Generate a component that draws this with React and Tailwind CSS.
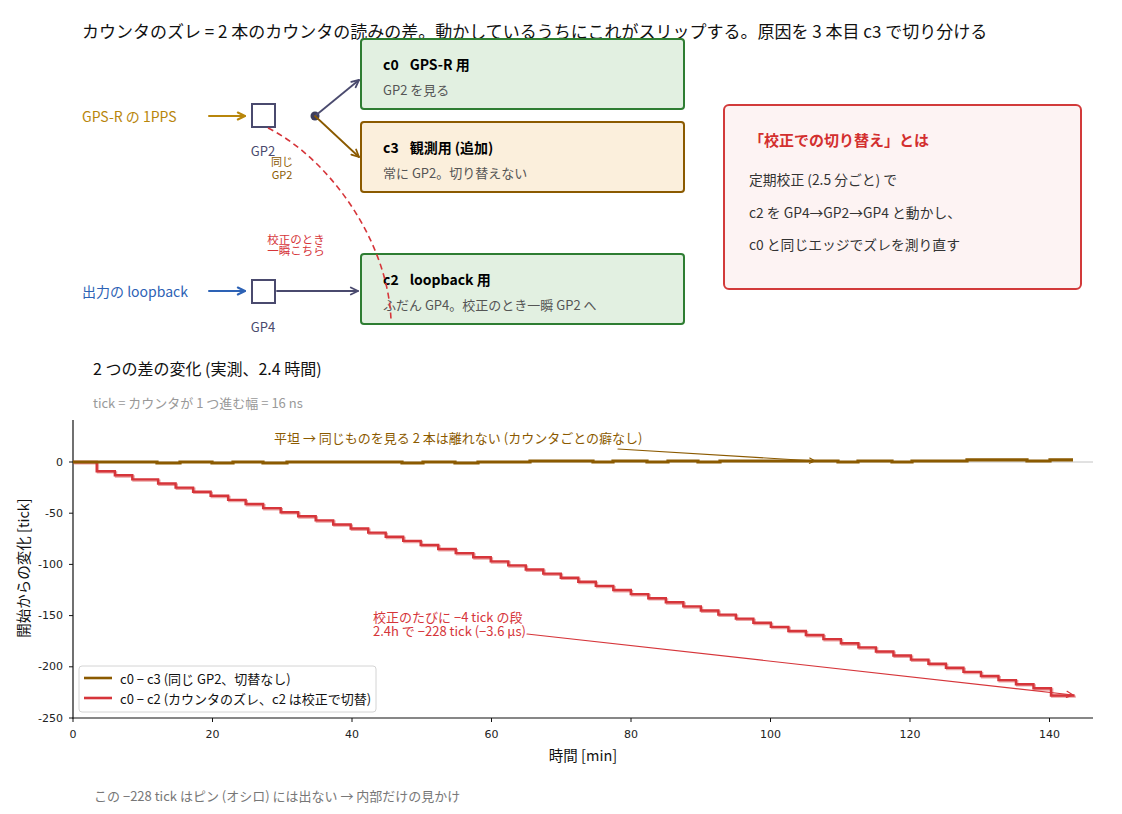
import React from "react";

const SLATE = "#4a4a6e";
const BROWN = "#8b5a00";
const GOLD = "#b8860b";
const BLUE = "#2d62b5";
const RED = "#d6353a";

// 矢印（matplotlib の "->" 風の開いた矢じり）
const Arrow = ({ x1, y1, x2, y2, color, w = 1.6, len = 8 }) => {
  const a = Math.atan2(y2 - y1, x2 - x1);
  const s = 0.45;
  const p1 = `${x2 - len * Math.cos(a - s)},${y2 - len * Math.sin(a - s)}`;
  const p2 = `${x2 - len * Math.cos(a + s)},${y2 - len * Math.sin(a + s)}`;
  return (
    <g stroke={color} strokeWidth={w} fill="none" strokeLinecap="round">
      <line x1={x1} y1={y1} x2={x2} y2={y2} />
      <polyline points={`${p1} ${x2},${y2} ${p2}`} strokeLinejoin="round" />
    </g>
  );
};

// チャート座標
const X = (m) => 73 + m * 6.975;
const Y = (v) => 462 - v * 1.024;

const stepPath = (segs, endX) => {
  let d = `M${segs[0][0]},${Y(segs[0][1])}`;
  for (let i = 1; i < segs.length; i++) {
    d += ` H${segs[i][0]} V${Y(segs[i][1])}`;
  }
  return d + ` H${endX}`;
};

// c0 - c3 : ほぼ 0 のまま（±1〜2 tick）
const brownSegs = [
  [73, 0], [157, -1], [180, 0], [212, -1], [233, 0], [263, -1], [287, 0],
  [402, -1], [423, 0], [455, -1], [478, 0], [530, 1], [593, 0], [613, 1],
  [647, 0], [668, 1], [698, 0], [720, 1], [838, 0], [858, 1], [892, 0],
  [912, 1], [967, 2], [1027, 1], [1050, 2],
];

// c0 - c2 : 校正ごとに -4 tick の段
const redSegs = (() => {
  const times = [3.4, 6.0, 8.5];
  for (let k = 0; k < 52; k++) times.push(12.2 + k * 2.51);
  const segs = [[X(0), 0]];
  times.forEach((t, i) => {
    const v = i === times.length - 1 ? -228 : -9 - 4 * i;
    segs.push([X(t), v]);
  });
  return segs;
})();

const yTicks = [0, -50, -100, -150, -200, -250];
const xTicks = [0, 20, 40, 60, 80, 100, 120, 140];

const Chart = () => (
  <div className="relative h-[360px]">
    <svg
      width="1122"
      height="360"
      viewBox="0 412 1122 360"
      className="block"
      fontFamily="'Noto Sans CJK JP', sans-serif"
    >
      {/* y = 0 の基準線 */}
      <line x1="73" y1="462" x2="1093" y2="462" stroke="#c4c4c4" strokeWidth="1" />

      {/* spines */}
      <line x1="73" y1="420" x2="73" y2="718.5" stroke="#111" strokeWidth="1.2" />
      <line x1="72.5" y1="718" x2="1093" y2="718" stroke="#111" strokeWidth="1.2" />

      {yTicks.map((v) => (
        <g key={v}>
          <line x1="69" y1={Y(v)} x2="73" y2={Y(v)} stroke="#111" strokeWidth="1" />
          <text
            x="63"
            y={Y(v)}
            textAnchor="end"
            dominantBaseline="central"
            fontSize="11"
            fontFamily="'DejaVu Sans', sans-serif"
            fill="#222"
          >
            {v}
          </text>
        </g>
      ))}
      {xTicks.map((m) => (
        <g key={m}>
          <line x1={X(m)} y1="718" x2={X(m)} y2="722" stroke="#111" strokeWidth="1" />
          <text
            x={X(m)}
            y="734"
            textAnchor="middle"
            dominantBaseline="central"
            fontSize="11"
            fontFamily="'DejaVu Sans', sans-serif"
            fill="#222"
          >
            {m}
          </text>
        </g>
      ))}

      <text x="583" y="754" textAnchor="middle" dominantBaseline="central" fontSize="14.5" fill="#111">
        時間 [min]
      </text>
      <text
        x="22"
        y="568"
        textAnchor="middle"
        dominantBaseline="central"
        fontSize="14.5"
        fill="#111"
        transform="rotate(-90 22 568)"
      >
        開始からの変化 [tick]
      </text>

      {/* データ */}
      <path
        d={stepPath(redSegs, X(143.6))}
        fill="none"
        stroke="#eba3a3"
        strokeWidth="2.4"
        transform="translate(1.2 1.2)"
      />
      <path d={stepPath(redSegs, X(143.6))} fill="none" stroke={RED} strokeWidth="2.4" />
      <path d={stepPath(brownSegs, 1073)} fill="none" stroke={BROWN} strokeWidth="3.2" />

      {/* 注記 */}
      <text x="274" y="437" dominantBaseline="central" fontSize="13" fill={BROWN}>
        平坦 → 同じものを見る 2 本は離れない (カウンタごとの癖なし)
      </text>
      <Arrow x1={618} y1={449} x2={815} y2={461} color={BROWN} w={1.2} len={6} />
      <Arrow x1={527} y1={634} x2={1073} y2={695} color={RED} w={1.2} len={7} />

      {/* 凡例 */}
      <rect x="79" y="666" width="297" height="46" rx="3" fill="#fff" fillOpacity="0.85" stroke="#d4d4d4" />
      <line x1="84" y1="678" x2="112" y2="678" stroke={BROWN} strokeWidth="2.6" />
      <text x="120" y="678" dominantBaseline="central" fontSize="13" fill="#111">
        c0 − c3 (同じ GP2、切替なし)
      </text>
      <line x1="84" y1="698" x2="112" y2="698" stroke={RED} strokeWidth="2.6" />
      <text x="120" y="698" dominantBaseline="central" fontSize="13" fill="#111">
        c0 − c2 (カウンタのズレ、c2 は校正で切替)
      </text>
    </svg>
    <p className="absolute left-[373px] top-[198px] text-[13px] leading-[14px] text-[#d6353a] whitespace-nowrap">
      校正のたびに −4 tick の段
      <br />
      2.4h で −228 tick (−3.6 µs)
    </p>
  </div>
);

const CounterBox = ({ top, id, title, sub, tone }) => (
  <div
    className={`absolute left-[360px] w-[325px] h-[72px] rounded-[4px] border-2 pl-[21px] pt-[14px] ${
      tone === "green" ? "bg-[#e2f0e1] border-[#2e7d32]" : "bg-[#fbefdc] border-[#8b5a00]"
    }`}
    style={{ top }}
  >
    <p className="flex gap-[11px] text-[14px] leading-[20px] font-bold text-black">
      <span>{id}</span>
      <span>{title}</span>
    </p>
    <p className="mt-[7px] text-[13px] leading-[18px] text-[#555]">{sub}</p>
  </div>
);

const Diagram = () => (
  <div className="relative h-[300px]">
    <p className="absolute left-[82px] top-[69px] text-[14px] leading-[18px] text-[#b8860b]">GPS-R の 1PPS</p>
    <p className="absolute left-[82px] top-[244px] text-[14px] leading-[18px] text-[#2d62b5]">出力の loopback</p>

    <CounterBox top={0} id="c0" title="GPS-R 用" sub="GP2 を見る" tone="green" />
    <CounterBox top={83} id="c3" title="観測用 (追加)" sub="常に GP2。切り替えない" tone="orange" />
    <CounterBox top={215} id="c2" title="loopback 用" sub="ふだん GP4。校正のとき一瞬 GP2 へ" tone="green" />

    <div className="absolute left-[723px] top-[66px] w-[359px] h-[186px] rounded-[6px] border-2 border-[#d23a3a] bg-[#fdf3f3] pl-[24px] pt-[24px]">
      <p className="text-[15px] leading-[20px] font-bold text-[#d32f2f]">「校正での切り替え」とは</p>
      <div className="mt-[20px] flex flex-col gap-[14.5px] text-[13.8px] leading-[18px] text-[#333]">
        <p>定期校正 (2.5 分ごと) で</p>
        <p>c2 を GP4→GP2→GP4 と動かし、</p>
        <p>c0 と同じエッジでズレを測り直す</p>
      </div>
    </div>

    <svg
      width="1122"
      height="300"
      viewBox="0 38 1122 300"
      className="absolute inset-0 pointer-events-none"
      fontFamily="'Noto Sans CJK JP', sans-serif"
    >
      <Arrow x1={209} y1={116} x2={245} y2={116} color={GOLD} w={2} />
      <rect x="252" y="104" width="23" height="23" fill="#fff" stroke={SLATE} strokeWidth="2" />
      <text x="263" y="150" textAnchor="middle" dominantBaseline="central" fontSize="13" fill={SLATE}>
        GP2
      </text>
      <circle cx="315" cy="116" r="4.5" fill="#3d3d5c" />
      <Arrow x1={315} y1={116} x2={359} y2={80} color={SLATE} w={1.8} />
      <Arrow x1={315} y1={116} x2={359} y2={157} color={BROWN} w={1.8} />

      <Arrow x1={209} y1={291} x2={245} y2={291} color={BLUE} w={2} />
      <rect x="252" y="280" width="23" height="23" fill="#fff" stroke={SLATE} strokeWidth="2" />
      <text x="263" y="326" textAnchor="middle" dominantBaseline="central" fontSize="13" fill={SLATE}>
        GP4
      </text>
      <Arrow x1={277} y1={291} x2={358} y2={291} color={SLATE} w={1.8} />

      <path
        d="M268,128 C328,158 388,240 391,320"
        fill="none"
        stroke={RED}
        strokeWidth="1.6"
        strokeDasharray="6 4"
      />
    </svg>

    <p className="absolute left-[262px] top-[117px] w-[40px] text-center text-[11px] leading-[13px] text-[#8b5a00]">
      同じ
      <br />
      GP2
    </p>
    <p className="absolute left-[256px] top-[196px] w-[80px] text-center text-[11.5px] leading-[11px] text-[#d6353a]">
      校正のとき
      <br />
      一瞬こちら
    </p>
  </div>
);

export default function App() {
  return (
    <div className="flex flex-col w-[1122px] h-[814px] overflow-hidden bg-white font-['Noto_Sans_CJK_JP',sans-serif] text-[#111]">
      <p className="h-[38px] pt-[21px] pl-[82px] text-[17px] leading-[20px] whitespace-nowrap">
        カウンタのズレ = 2 本のカウンタの読みの差。動かしているうちにこれがスリップする。原因を 3 本目 c3 で切り分ける
      </p>
      <Diagram />
      <p className="mt-[20px] pl-[93px] text-[16px] leading-[20px]">2 つの差の変化 (実測、2.4 時間)</p>
      <p className="mt-[16px] pl-[93px] text-[13px] leading-[18px] text-[#999]">tick = カウンタが 1 つ進む幅 = 16 ns</p>
      <Chart />
      <p className="mt-[15px] pl-[94px] text-[13px] leading-[18px] text-[#777]">
        この −228 tick はピン (オシロ) には出ない → 内部だけの見かけ
      </p>
    </div>
  );
}
